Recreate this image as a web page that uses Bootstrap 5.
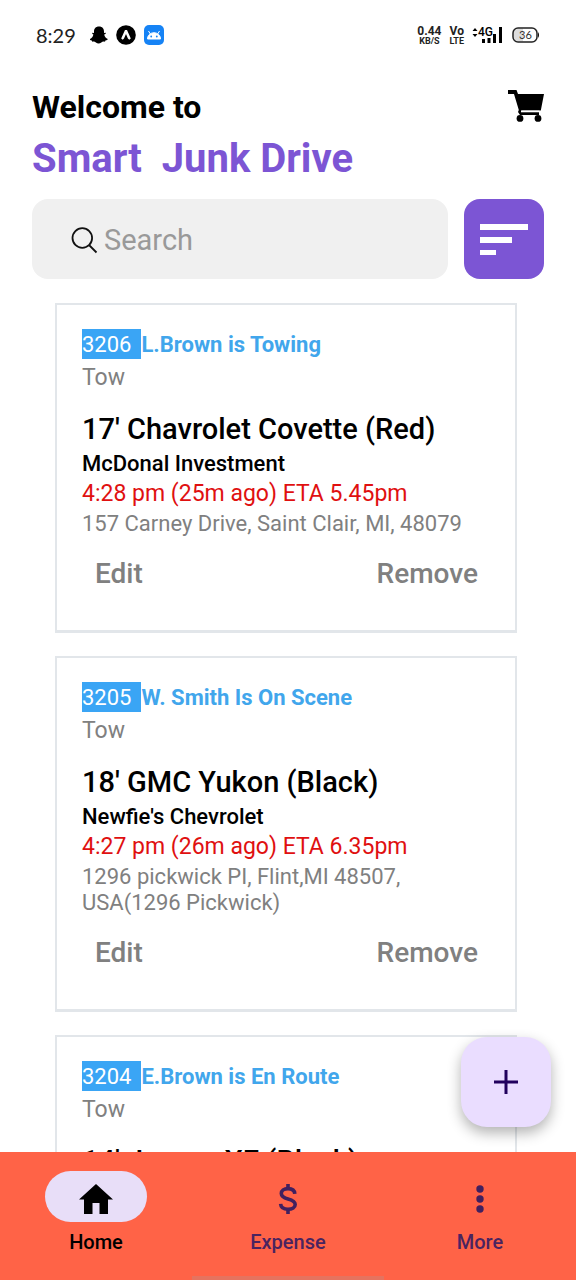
<!DOCTYPE html>
<html lang="en">
<head>
<meta charset="utf-8">
<meta name="viewport" content="width=device-width, initial-scale=1">
<title>Smart Junk Drive</title>
<link href="https://cdn.jsdelivr.net/npm/bootstrap@5.3.0/dist/css/bootstrap.min.css" rel="stylesheet">
<style>
body { font-family: Roboto, "Liberation Sans", sans-serif; color: #000; background: #fff; }
svg { display: block; flex: none; }
.status-bar { height: 70px; padding: 0 36px; color: #222; flex: none; }
.clock { font: 20px/28px Lato, sans-serif; width: 42px; }
.status-icons { gap: 8px; }
.status-icons .clock { margin-right: 4px; }
.tiny-stack { font-weight: 700; text-align: center; }
.tiny-stack div { font-size: 12px; line-height: 12px; }
.tiny-stack div + div { font-size: 9px; line-height: 9px; }
.header { padding: 16px 32px 0; flex: none; }
.greeting { font-size: 32px; line-height: 42px; font-weight: 700; }
.brand-name { font-size: 40px; line-height: 52px; font-weight: 700; color: #7c55d4; white-space: pre; margin: 5px 0 0; }
.search-row { padding: 14px 32px 0; gap: 16px; flex: none; }
.search-box { height: 80px; border-radius: 16px; background: #f0f0f0; padding: 2px 38px 0; gap: 6px; }
.search-box input { font-size: 29px; line-height: 40px; color: #333; }
.search-box input::placeholder { color: #999; opacity: 1; }
.filter-btn { width: 80px; height: 80px; flex: none; border-radius: 16px; background: #7c55d4; }
.job-feed { min-height: 0; }
.jobs { padding: 24px 59px 0 55px; gap: 23px; }
.job { border: 2px solid #e2e6ea; border-bottom-width: 3px; border-radius: 0; padding: 24px 24px 23px 25px; flex: none; font-size: 22px; line-height: 26px; color: #808080; }
.job p { margin: 0 0 4px; }
.job-head { line-height: 28px; color: #41a6ec; margin-bottom: 6px; }
.job-no { background: #3aa5f5; color: #fff; padding: 2px 10px 0 0; }
.job-head strong { font-weight: 700; padding-top: 2px; }
.job h2 { font-size: 29px; line-height: 34px; font-weight: 500; color: #000; margin: 21px 0 5px; }
.job .client { color: #000; font-weight: 500; }
.job .service, .job .eta { font-size: 23px; }
.job .eta { color: #e01010; }
.job-actions button { font-size: 28px; line-height: 34px; font-weight: 500; color: #808080; padding: 16px 13px; border: 0; background: none; }
.fab { position: absolute; right: 25px; bottom: 25px; width: 90px; height: 90px; border-radius: 26px; background: #eaddff; box-shadow: 0 6px 14px rgba(0,0,0,.3); }
.tabs { background: #ff6347; height: 128px; padding-top: 19px; flex: none; }
.tabs a { color: #4a2460; font-size: 20px; line-height: 24px; font-weight: 500; text-decoration: none; gap: 8px; }
.tabs a.current { color: #000; }
.tab-pill { width: 102px; height: 51px; border-radius: 26px; padding-top: 4px; }
.current .tab-pill { background: #e8def8; }
.home-bar { position: absolute; left: 33.33%; right: 33.33%; bottom: 0; height: 4px; background: #e5735f; }
</style>
</head>
<body class="vh-100 d-flex flex-column overflow-hidden">
<div class="status-bar d-flex align-items-center justify-content-between">
  <div class="status-icons d-flex align-items-center">
    <span class="clock">8:29</span>
    <svg width="18" height="20" viewBox="0 0 18 20"><path fill="#000" d="M9 1.500c3.400 0 5 2.300 5 5v1.500l1.600-.3c.6.600 0 1.200-1.400 1.900.4 2.400 1.600 3.600 3.600 4.400-.1 1-1 1.200-2.400 1.500l-.4 1.200c-1.800-.3-2.700-.1-3.700.7-1.600 1.400-3.800 1.400-5.400 0-1-.8-1.900-1-3.700-.7l-.4-1.200c-1.200-.3-2-.5-2-1.500 1.900-.8 3.200-2 3.600-4.400C2.400 8.900 1.800 8.300 2.400 7.700L4 8V6.500c0-2.700 1.600-5 5-5z"/></svg>
    <svg width="20" height="20" viewBox="0 0 20 20"><circle cx="10" cy="10" r="9.800"/><path fill="#fff" d="M9 5h2l3.800 8.600-1.500 1.200-1.400-1.400L10 9l-2 4.400-1.300 1.400-1.500-1.200z"/></svg>
    <svg width="20" height="20" viewBox="0 0 20 20"><rect width="20" height="20" rx="5" fill="#1683f5"/><path d="M3.500 14a6.500 6.300 0 0 1 13 0zM4.500 6l2.500 4M15.500 6L13 10" fill="#fff" stroke="#fff" stroke-width="1"/><circle cx="7.200" cy="11.500" r=".9" fill="#1683f5"/><circle cx="12.800" cy="11.500" r=".9" fill="#1683f5"/></svg>
  </div>
  <div class="d-flex align-items-center gap-2">
    <div class="tiny-stack"><div>0.44</div><div>KB/S</div></div>
    <div class="tiny-stack"><div>Vo</div><div>LTE</div></div>
    <svg width="32" height="20" viewBox="0 0 32 20"><path d="M.500 6L3 3l2.500 3zM.500 9L3 12l2.500-3z"/><text x="6" y="11" font-family="Roboto" font-size="12" font-weight="500">4G</text><path d="M10 14h3v4h-3zM15.500 13h3v5h-3zM21 9h3v9h-3zM27 2h3v16h-3z"/></svg>
    <svg width="28" height="16" viewBox="0 0 28 16"><path fill="#ddd" d="M8 1.500h3v13H7a6 6 0 0 1-6-6.500c0-4 3-6.500 7-6.500z"/><rect x="1" y="1" width="24" height="14" rx="5" fill="none" stroke="#222" stroke-width="1.500"/><path d="M26 5q2 3 0 6z"/><text x="7" y="12" font-family="Lato" font-size="11" fill="#333">36</text></svg>
  </div>
</div>
<header class="header d-flex justify-content-between align-items-start">
  <div>
    <div class="greeting">Welcome to</div>
    <h1 class="brand-name">Smart  Junk Drive</h1>
  </div>
  <button class="btn p-0 border-0 mt-1" aria-label="Cart"><svg width="36" height="32" viewBox="0 0 36 32"><path d="M0 0h8.500l1.500 4H36l-3.200 16.500H13.500l-.6 1.800H31V25H12l-2-3 .8-2L6 4H0z"/><circle cx="12" cy="28.400" r="3.400"/><circle cx="30" cy="28.400" r="3.400"/><path d="M13 21.300h18.500" stroke="#fff" stroke-width="1.500"/></svg></button>
</header>
<div class="search-row d-flex">
  <label class="search-box d-flex align-items-center flex-grow-1">
    <svg width="28" height="28" viewBox="0 0 28 28" fill="none" stroke="#111" stroke-width="1.800"><circle cx="12.300" cy="12" r="9.800"/><path d="M19 19l7.500 7.500"/></svg>
    <input type="text" class="border-0 bg-transparent p-0 w-100" placeholder="Search" aria-label="Search">
  </label>
  <button class="filter-btn btn p-0 border-0 d-flex align-items-center justify-content-center" aria-label="Filter"><svg width="48" height="32" viewBox="0 0 48 32" fill="#fff"><path d="M0 1h48v6H0zM0 14h32v6H0zM0 27h16v5H0z"/></svg></button>
</div>
<div class="job-feed position-relative flex-grow-1 overflow-hidden">
  <main class="jobs d-flex flex-column h-100">
    <article class="job">
      <div class="job-head d-flex"><span class="job-no">3206</span><strong>L.Brown is Towing</strong></div>
      <p class="service">Tow</p>
      <h2>17' Chavrolet Covette (Red)</h2>
      <p class="client">McDonal Investment</p>
      <p class="eta">4:28 pm (25m ago) ETA 5.45pm</p>
      <p>157 Carney Drive, Saint Clair, MI, 48079</p>
      <div class="job-actions d-flex justify-content-between"><button>Edit</button><button>Remove</button></div>
    </article>
    <article class="job">
      <div class="job-head d-flex"><span class="job-no">3205</span><strong>W. Smith Is On Scene</strong></div>
      <p class="service">Tow</p>
      <h2>18' GMC Yukon (Black)</h2>
      <p class="client">Newfie's Chevrolet</p>
      <p class="eta">4:27 pm (26m ago) ETA 6.35pm</p>
      <p>1296 pickwick PI, Flint,MI 48507, USA(1296 Pickwick)</p>
      <div class="job-actions d-flex justify-content-between"><button>Edit</button><button>Remove</button></div>
    </article>
    <article class="job">
      <div class="job-head d-flex"><span class="job-no">3204</span><strong>E.Brown is En Route</strong></div>
      <p class="service">Tow</p>
      <h2>14' Jaguar XE (Black)</h2>
    </article>
  </main>
  <button class="fab btn p-0 border-0 d-flex align-items-center justify-content-center" aria-label="Add job"><svg width="24" height="24" viewBox="0 0 24 24" stroke="#21005d" stroke-width="3"><path d="M12 0v24M0 12h24"/></svg></button>
</div>
<nav class="tabs position-relative d-flex">
  <a href="#home" class="current col-4 d-flex flex-column align-items-center"><span class="tab-pill d-flex align-items-center justify-content-center"><svg width="34" height="30" viewBox="0 0 34 30"><path d="M17 0l17 15.500h-5V30h-8.500V19h-7v11H5V15.500H0z"/></svg></span>Home</a>
  <a href="#expense" class="col-4 d-flex flex-column align-items-center"><span class="tab-pill d-flex align-items-center justify-content-center"><svg width="20" height="32" viewBox="0 0 20 32" fill="none" stroke="#41205f" stroke-width="3.600"><path d="M10 1v5M10 26v5"/><path d="M16.800 10.800C16.600 7.400 14 5.600 10 5.600S3.300 7.400 3.300 10.500c0 3.200 3 4.400 6.700 5.400s7.200 2.200 7.200 5.500c0 3-3 4.800-7.200 4.800S2.900 24.400 2.600 20.800"/></svg></span>Expense</a>
  <a href="#more" class="col-4 d-flex flex-column align-items-center"><span class="tab-pill d-flex align-items-center justify-content-center"><svg width="8" height="28" viewBox="0 0 8 28" fill="#41205f"><circle cx="4" cy="4" r="3.700"/><circle cx="4" cy="14" r="3.700"/><circle cx="4" cy="24" r="3.700"/></svg></span>More</a>
  <span class="home-bar"></span>
</nav>
<script src="https://cdn.jsdelivr.net/npm/bootstrap@5.3.0/dist/js/bootstrap.bundle.min.js"></script>
</body>
</html>
